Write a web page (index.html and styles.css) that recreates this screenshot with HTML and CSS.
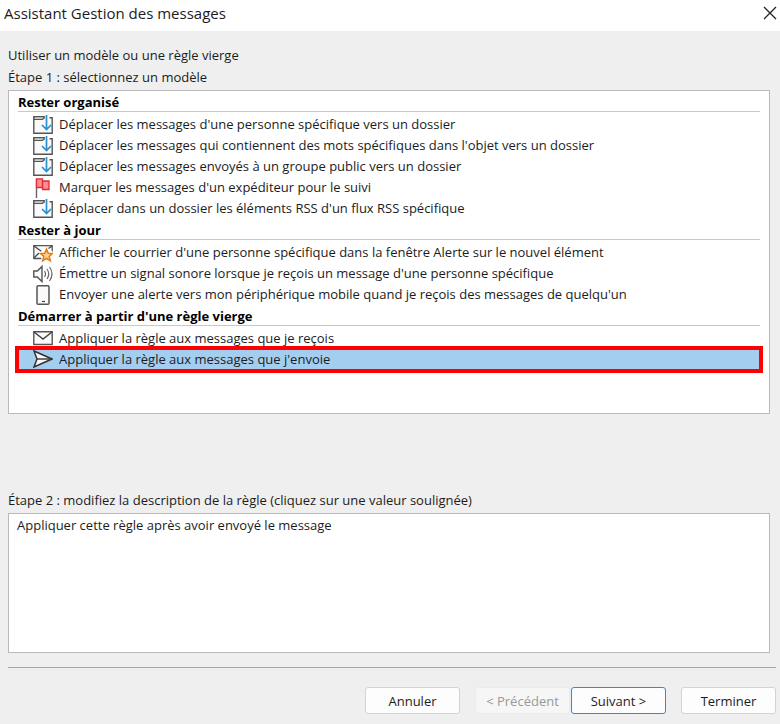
FILE: index.html
```html
<!DOCTYPE html>
<html lang="fr">
<head>
<meta charset="utf-8">
<meta name="viewport" content="width=device-width, initial-scale=1">
<title>Assistant Gestion des messages</title>
<link rel="stylesheet" href="styles.css">
</head>
<body>
<svg class="sprite" aria-hidden="true">
  <symbol id="folder" viewBox="0 0 20 20">
    <path d="M11 3.500V1.700H.8v16.500h18.400V2.700H16.500" fill="#fafafa" stroke="#555" stroke-width="1.400"/>
    <path d="M1 4.500h8.500l1.500-1.500V1.700H1z" fill="#ccc" stroke="#555" stroke-width="1.200"/>
    <path d="M13.500 0v14.500M9 10l4.500 4.500L18 10" fill="none" stroke="#2b8fd0" stroke-width="1.700"/>
  </symbol>
  <symbol id="flag" viewBox="0 0 20 20">
    <path d="M3.500 1v19" stroke="#666" stroke-width="1.400"/>
    <path d="M9.500 3h6.500v8.500H9.500z" fill="#ff8b92" stroke="#d92f35" stroke-width="1.300"/>
    <path d="M3.500.8h6v8.700h-6z" fill="#ff8b92" stroke="#d92f35" stroke-width="1.300"/>
  </symbol>
  <symbol id="mail-star" viewBox="0 0 20 20">
    <path d="M.8 2.700h18.400v12.800H.8z" fill="#fafafa" stroke="#555" stroke-width="1.300"/>
    <path d="M1 3l9 6.500L19 3M1 15l5-5" fill="none" stroke="#444" stroke-width="1.300"/>
    <path d="M13.500 4l4 3 2.500 2v8h-2l-4.500 1.500-4.500 0-1-4-2-4.500z" fill="#fff"/>
    <path d="M13.500 6l1.700 4.200 4.300.3-3.300 2.900 1.100 4.400-3.800-2.400-3.800 2.400 1.100-4.400-3.300-2.900 4.300-.3z" fill="#ffd08a" stroke="#e67a17" stroke-width="1.500"/>
  </symbol>
  <symbol id="sound" viewBox="0 0 20 20">
    <path d="M.8 7h3.500L9 2.500v15L4.300 13H.8z" fill="#fafafa" stroke="#555" stroke-width="1.400"/>
    <path d="M11.500 7q2 3 0 6M14 5q3.500 5 0 10M16.500 3q5 7 0 14" fill="none" stroke="#666" stroke-width="1.200"/>
  </symbol>
  <symbol id="phone" viewBox="0 0 20 20">
    <rect x="4" y=".8" width="12" height="18.400" rx="1" fill="#fafafa" stroke="#555" stroke-width="1.500"/>
    <path d="M9 16.500h3" stroke="#444" stroke-width="1.200"/>
  </symbol>
  <symbol id="mail" viewBox="0 0 20 20">
    <path d="M.8 2.700h18.400v12.800H.8z" fill="#fafafa" stroke="#555" stroke-width="1.400"/>
    <path d="M1 3l9 7 9-7" fill="none" stroke="#444" stroke-width="1.400"/>
  </symbol>
  <symbol id="send" viewBox="0 0 20 20">
    <path d="M1 1l18 8L1 17l3-8z" fill="#fafafa" stroke="#333" stroke-width="1.500"/>
    <path d="M4 9h14" stroke="#333" stroke-width="1.400"/>
  </symbol>
</svg>

<main class="dialog">
  <header class="titlebar">
    <h1>Assistant Gestion des messages</h1>
    <button class="close" type="button" aria-label="Fermer"><svg viewBox="0 0 14 14"><path d="M1 1l12 12M13 1L1 13"/></svg></button>
  </header>

  <form class="content">
    <p class="line">Utiliser un modèle ou une règle vierge</p>
    <p class="line" id="step1">Étape 1 : sélectionnez un modèle</p>
    <div class="templates" role="group" aria-labelledby="step1">
      <h2>Rester organisé</h2>
      <button class="item" type="button"><svg class="icon"><use href="#folder"/></svg>Déplacer les messages d'une personne spécifique vers un dossier</button>
      <button class="item" type="button"><svg class="icon"><use href="#folder"/></svg>Déplacer les messages qui contiennent des mots spécifiques dans l'objet vers un dossier</button>
      <button class="item" type="button"><svg class="icon"><use href="#folder"/></svg>Déplacer les messages envoyés à un groupe public vers un dossier</button>
      <button class="item" type="button"><svg class="icon"><use href="#flag"/></svg>Marquer les messages d'un expéditeur pour le suivi</button>
      <button class="item" type="button"><svg class="icon"><use href="#folder"/></svg>Déplacer dans un dossier les éléments RSS d'un flux RSS spécifique</button>
      <h2>Rester à jour</h2>
      <button class="item" type="button"><svg class="icon"><use href="#mail-star"/></svg>Afficher le courrier d'une personne spécifique dans la fenêtre Alerte sur le nouvel élément</button>
      <button class="item" type="button"><svg class="icon"><use href="#sound"/></svg>Émettre un signal sonore lorsque je reçois un message d'une personne spécifique</button>
      <button class="item" type="button"><svg class="icon"><use href="#phone"/></svg>Envoyer une alerte vers mon périphérique mobile quand je reçois des messages de quelqu'un</button>
      <h2>Démarrer à partir d'une règle vierge</h2>
      <button class="item" type="button"><svg class="icon"><use href="#mail"/></svg>Appliquer la règle aux messages que je reçois</button>
      <button class="item selected" type="button" aria-pressed="true"><svg class="icon"><use href="#send"/></svg>Appliquer la règle aux messages que j'envoie</button>
    </div>

    <label class="line" for="description">Étape 2 : modifiez la description de la règle (cliquez sur une valeur soulignée)</label>
    <textarea id="description" class="description" readonly>Appliquer cette règle après avoir envoyé le message</textarea>
  </form>

  <footer class="actions">
    <button class="btn" type="button">Annuler</button>
    <div class="pair">
      <button class="btn" type="button" disabled>&lt; Précédent</button>
      <button class="btn primary" type="button">Suivant &gt;</button>
    </div>
    <button class="btn" type="button">Terminer</button>
  </footer>
</main>
</body>
</html>
```

FILE: styles.css
```css
* {
  box-sizing: border-box;
}

body {
  margin: 0;
  background: #efefef;
  color: #1c1c1c;
  font: 13px/22px "Open Sans", "Noto Sans", sans-serif;
}

button,
textarea {
  font: inherit;
  color: inherit;
}

.sprite {
  display: none;
}

.dialog {
  display: flex;
  flex-direction: column;
  min-height: 100vh;
}

.titlebar {
  display: flex;
  justify-content: space-between;
  align-items: center;
  height: 31px;
  padding: 0 3px 6px 4px;
  background: #fff;
}

.titlebar h1 {
  margin: 0;
  font-size: 15px;
  font-weight: 400;
}

.close {
  display: flex;
  padding: 0;
  border: 0;
  background: none;
}

.close svg {
  width: 14px;
  height: 14px;
  fill: none;
  stroke: #222;
  stroke-width: 1.3;
}

.content {
  display: flex;
  flex: 1;
  flex-direction: column;
  padding: 13px 10px 14px 8px;
}

.line {
  margin: 0;
}

.templates {
  height: 324px;
  margin: 2px 0 75px;
  padding: 0 9px;
  border: 1px solid #b9b9bc;
  background: #fff;
}

.templates h2 {
  height: 21px;
  margin: 0 0 2px;
  border-bottom: 1px solid #c8c8c8;
  color: #000;
  font-size: 13px;
  line-height: 22px;
}

.item {
  display: flex;
  align-items: center;
  gap: 6px;
  width: 100%;
  height: 21px;
  padding: 0 0 0 15px;
  border: 0;
  background: none;
  line-height: 21px;
  text-align: left;
  white-space: nowrap;
}

.selected {
  background: #a3cef0;
  outline: 4px solid #f00;
  outline-offset: -1px;
}

.icon {
  flex: none;
  width: 20px;
  height: 20px;
}

.description {
  flex: 1;
  width: 100%;
  margin-top: 2px;
  padding: 0 8px;
  border: 1px solid #b9b9bc;
  background: #fff;
  outline: 0;
  resize: none;
}

.actions {
  display: flex;
  justify-content: flex-end;
  gap: 15px;
  margin: 0 4px 0 8px;
  padding: 19px 0 10px;
  border-top: 1px solid #a5a5a5;
}

.pair {
  display: flex;
  gap: 1px;
}

.btn {
  width: 95px;
  height: 27px;
  padding: 0;
  border: 1px solid #d3d3d3;
  border-radius: 3px;
  background: #fdfdfd;
}

.btn:disabled {
  border-color: #ebebeb;
  background: #f6f6f6;
  color: #999;
}

.btn.primary {
  border-color: #2f8bd8;
}
```
